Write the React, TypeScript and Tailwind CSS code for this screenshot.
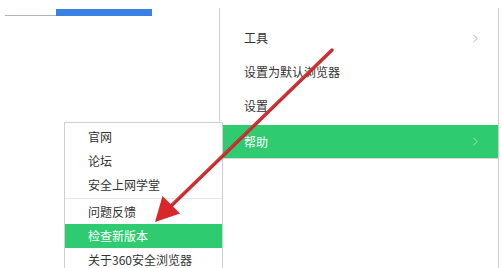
import { ChevronRight } from "lucide-react"

const font = { fontFamily: '"Noto Sans CJK SC", "Noto Sans", sans-serif' }

function MainItem({ label, active, arrow }: { label: string; active?: boolean; arrow?: boolean }) {
  return (
    <div
      className={`flex items-center justify-between pl-6 pr-4 ${
        active ? "h-[33px] mt-[2px] bg-[#2fcb71] text-white" : "h-[34px] text-[#333]"
      }`}
    >
      <span className="text-[12px] leading-none">{label}</span>
      {arrow && (
        <ChevronRight
          size={13}
          strokeWidth={1.25}
          className={active ? "text-white/80" : "text-[#888]"}
        />
      )}
    </div>
  )
}

function SubItem({ label, active }: { label: string; active?: boolean }) {
  return (
    <div
      className={`flex h-[24px] items-center pl-[23px] ${
        active ? "bg-[#2fcb71] text-white" : "text-[#333]"
      }`}
    >
      <span className="text-[12px] leading-none">{label}</span>
    </div>
  )
}

export default function App() {
  return (
    <div className="relative h-[268px] w-[502px] overflow-hidden bg-white" style={font}>
      {/* top tab strip */}
      <div className="flex items-end pl-[5px] pt-[9px]">
        <div className="h-px w-[51px] bg-[#a9b4c4]" />
        <div className="h-[7px] w-[96px] bg-[#3b80e3]" />
      </div>

      {/* main menu */}
      <div className="absolute left-[219px] top-[8px] h-[270px] w-[280px] border-x border-[#cfcfcf] bg-white pt-[13px]">
        <MainItem label="工具" arrow />
        <MainItem label="设置为默认浏览器" />
        <MainItem label="设置" />
        <MainItem label="帮助" active arrow />
        <div className="h-px bg-[#d6d6d6]" />
      </div>

      {/* help submenu */}
      <div className="absolute left-[64px] top-[122px] h-[160px] w-[159px] border border-[#cfcfcf] bg-white pt-[2px]">
        <SubItem label="官网" />
        <SubItem label="论坛" />
        <SubItem label="安全上网学堂" />
        <div className="my-[1px] h-px bg-[#e6e6e6]" />
        <SubItem label="问题反馈" />
        <SubItem label="检查新版本" active />
        <SubItem label="关于360安全浏览器" />
      </div>

      {/* red annotation arrow */}
      <svg className="absolute left-0 top-0" width="502" height="268" viewBox="0 0 502 268">
        <line x1="332" y1="50" x2="170" y2="207" stroke="#c7282c" strokeWidth="3.5" strokeLinecap="round" />
        <line x1="331" y1="50" x2="172" y2="204" stroke="#e0575a" strokeWidth="1" strokeLinecap="round" opacity="0.6" />
        <polygon points="155,222 162.5,196 180,213.5" fill="#d8262b" />
      </svg>
    </div>
  )
}
